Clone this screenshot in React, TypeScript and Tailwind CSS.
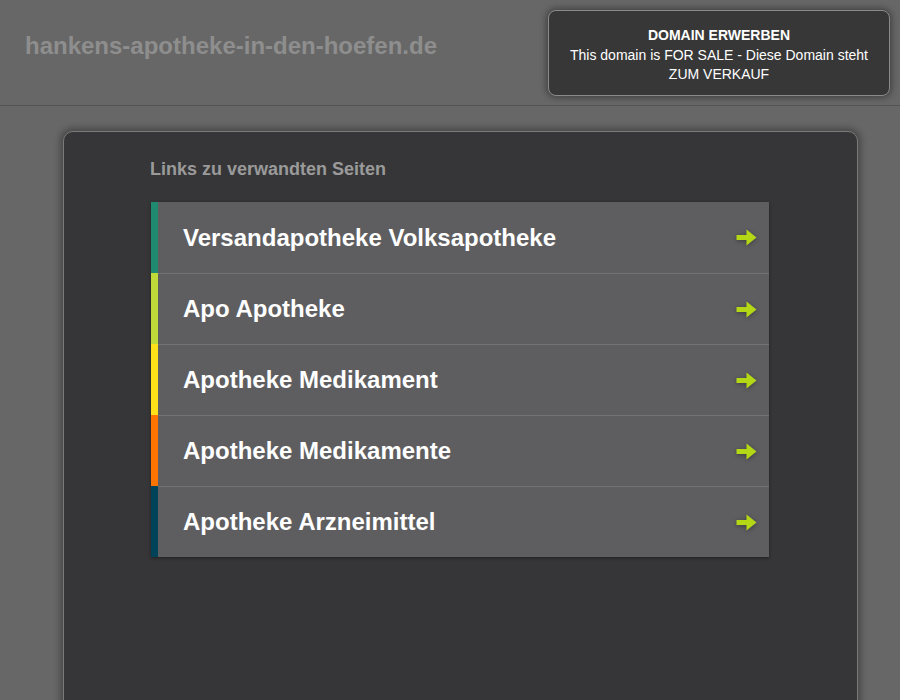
import React from "react";

const links = [
  { label: "Versandapotheke Volksapotheke", color: "bg-[#1f8a70]" },
  { label: "Apo Apotheke", color: "bg-[#bedb39]" },
  { label: "Apotheke Medikament", color: "bg-[#ffe11a]" },
  { label: "Apotheke Medikamente", color: "bg-[#fd7400]" },
  { label: "Apotheke Arzneimittel", color: "bg-[#004358]" },
];

function Arrow() {
  return (
    <svg width="21" height="17" viewBox="0 0 21 17" className="shrink-0 drop-shadow-[0_1px_2px_rgba(0,0,0,0.35)]">
      <path d="M0.5 6 H10.5 V0.5 L20.5 8.5 L10.5 16.5 V11 H0.5 Z" fill="#b5d816" />
    </svg>
  );
}

export default function App() {
  return (
    <div
      className="w-[900px] h-[700px] overflow-hidden bg-[#676767]"
      style={{ fontFamily: '"Liberation Sans", Arial, sans-serif' }}
    >
      <header className="h-[106px] border-b border-[#545454] flex items-start justify-between pl-[25px] pr-[10px]">
        <div className="pt-[31px] text-[24px] font-bold text-[#8e8e8e] leading-[30px]">
          hankens-apotheke-in-den-hoefen.de
        </div>
        <div className="mt-[10px] w-[342px] h-[86px] rounded-[8px] bg-[#373737] border border-[#8a8a8a] shadow-[0_0_6px_2px_rgba(0,0,0,0.35)] flex flex-col items-center pt-[15px] text-white text-[14px] leading-[19px]">
          <div className="font-bold">DOMAIN ERWERBEN</div>
          <div className="mt-[1px]">This domain is FOR SALE - Diese Domain steht</div>
          <div>ZUM VERKAUF</div>
        </div>
      </header>
      <div className="pt-[25px] pl-[63px]">
        <div className="w-[795px] h-[600px] rounded-t-[10px] bg-[#363638] border border-[#7a7a7a] shadow-[0_0_6px_3px_rgba(0,0,0,0.3)] pl-[86px] pt-[26px]">
          <div className="text-[18px] font-bold text-[#9a9a9a] leading-[22px]">Links zu verwandten Seiten</div>
          <div className="mt-[22px] w-[618px] ml-[1px] shadow-[0_1px_3px_rgba(0,0,0,0.4)]">
            {links.map((l, i) => (
              <div key={i} className="flex h-[71px] bg-[#5e5e60]">
                <div className={`w-[7px] ${l.color}`} />
                <div className={`flex-1 flex items-center justify-between pl-[25px] pr-[12px] ${i === 0 ? "" : "border-t border-[#727272]"}`}>
                  <span className="text-white font-bold text-[24px]">{l.label}</span>
                  <Arrow />
                </div>
              </div>
            ))}
          </div>
        </div>
      </div>
    </div>
  );
}
